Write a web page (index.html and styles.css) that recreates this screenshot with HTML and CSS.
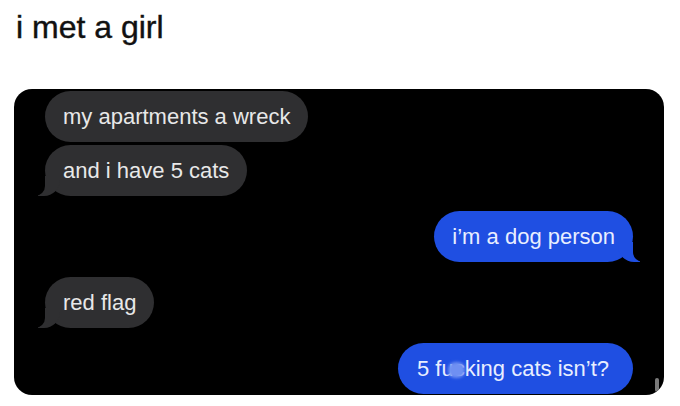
FILE: index.html
```html
<!DOCTYPE html>
<html>
<head>
<meta charset="utf-8">
<link rel="stylesheet" href="styles.css">
</head>
<body>
<h1 class="title">i met a girl</h1>
<div class="chat">
  <div class="bubble in first">my apartments a wreck</div>
  <div class="bubble in tail g-tight">and i have 5 cats</div>
  <div class="bubble out tail g-wide">i’m a dog person</div>
  <div class="bubble in tail g-wide">red flag</div>
  <div class="bubble out last g-wide">5 fu<span class="censor">c</span>king cats isn’t?</div>
  <span class="scroll"></span>
</div>
</body>
</html>
```
FILE: styles.css
```css
html, body {
  margin: 0;
  padding: 0;
  background: #ffffff;
}
body {
  width: 680px;
  height: 406px;
  overflow: hidden;
  font-family: "Liberation Sans", Arial, sans-serif;
}
.title {
  margin: 0;
  padding: 9px 0 0 16px;
  height: 80px;
  box-sizing: border-box;
  font-size: 32px;
  line-height: 36px;
  font-weight: normal;
  color: #111;
  -webkit-text-stroke: 0.4px #111;
}
.chat {
  position: relative;
  margin-left: 14px;
  width: 650px;
  height: 306px;
  margin-top: 9px;
  background: #000;
  border-radius: 18px;
  overflow: hidden;
  display: flex;
  flex-direction: column;
  align-items: flex-start;
  padding-top: 2px;
  box-sizing: border-box;
}
.bubble {
  position: relative;
  height: 51px;
  line-height: 51px;
  padding: 0 18px;
  border-radius: 26px;
  font-size: 22px;
  white-space: nowrap;
  box-sizing: border-box;
}
.in {
  background: #2f2f31;
  color: #e8e8e8;
  margin-left: 31px;
}
.out {
  background: #1f4fe2;
  color: #e8eeff;
  align-self: flex-end;
  margin-right: 31px;
}
.last {
  padding: 0 24px 0 19px;
}
.g-tight { margin-top: 3px; }
.g-wide { margin-top: 15px; }
.in.tail::before {
  content: "";
  position: absolute;
  bottom: 0;
  left: -7px;
  width: 22px;
  height: 20px;
  background: #2f2f31;
  border-bottom-right-radius: 16px;
  z-index: 0;
}
.in.tail::after {
  content: "";
  position: absolute;
  bottom: 0;
  left: -12px;
  width: 12px;
  height: 21px;
  background: #000;
  border-bottom-right-radius: 10px;
  z-index: 1;
}
.out.tail::before {
  content: "";
  position: absolute;
  bottom: 0;
  right: -7px;
  width: 22px;
  height: 20px;
  background: #1f4fe2;
  border-bottom-left-radius: 16px;
}
.out.tail::after {
  content: "";
  position: absolute;
  bottom: 0;
  right: -12px;
  width: 12px;
  height: 21px;
  background: #000;
  border-bottom-left-radius: 10px;
}
.censor {
  position: relative;
}
.censor::after {
  content: "";
  position: absolute;
  left: -6px;
  top: 6px;
  width: 17px;
  height: 16px;
  border-radius: 45%;
  background: #6f90f2;
  filter: blur(1.5px);
}
.scroll {
  position: absolute;
  right: 5px;
  bottom: 3px;
  width: 4px;
  height: 14px;
  border-radius: 2px;
  background: #7a7a7a;
}
```
